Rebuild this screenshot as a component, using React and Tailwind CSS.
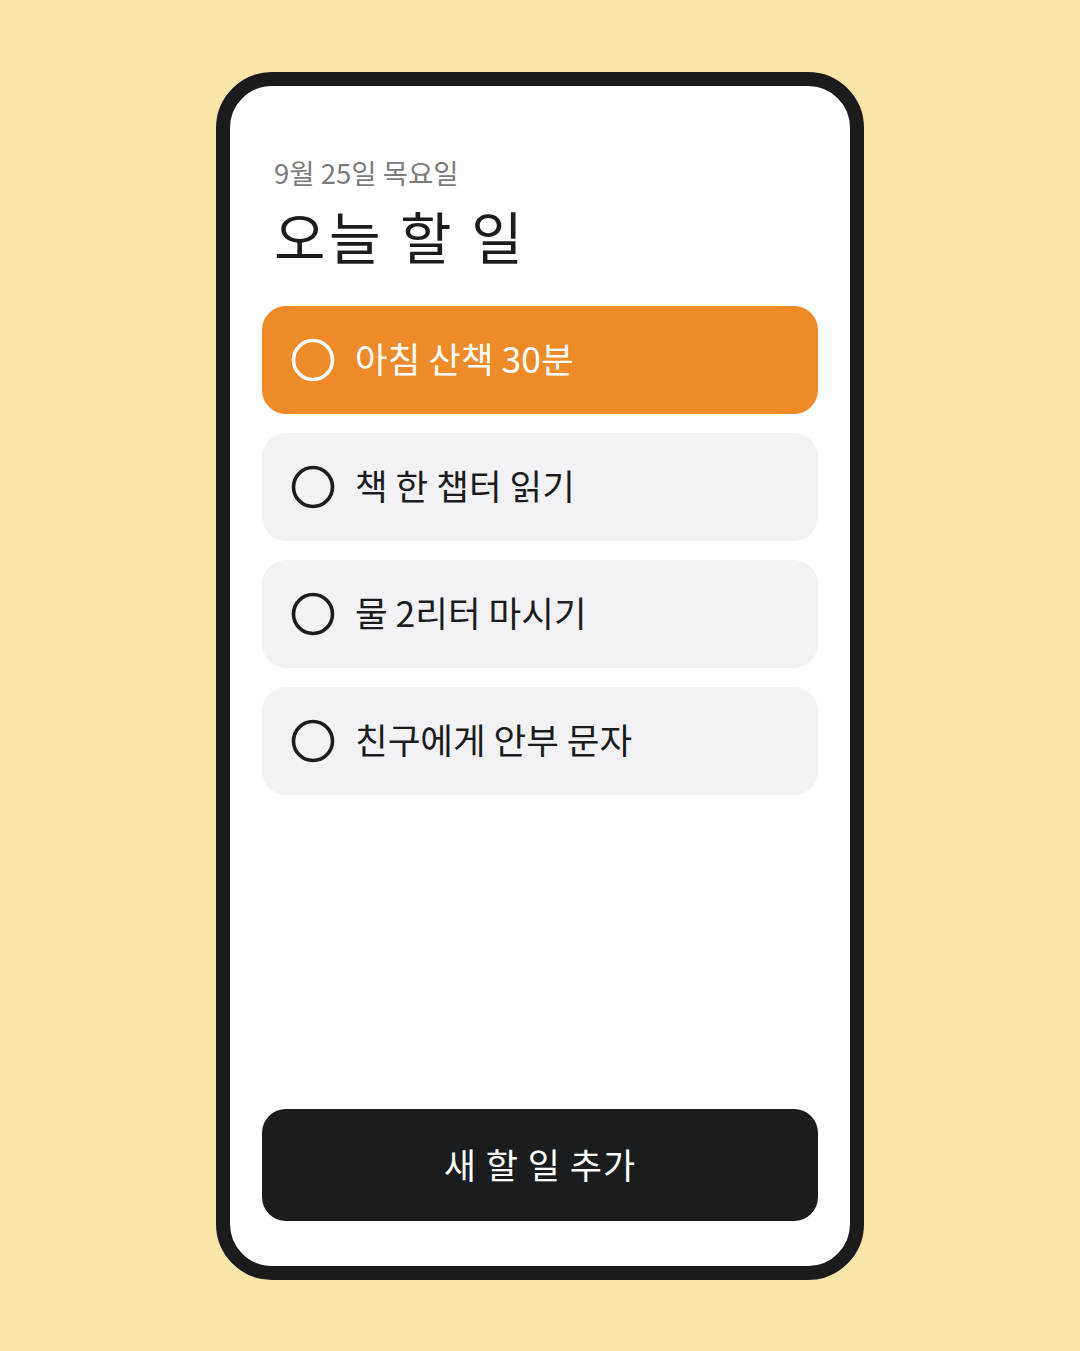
import React from "react";

const font = { fontFamily: '"Noto Sans CJK KR", "Noto Sans", sans-serif' };

function Circle({ white }) {
  return (
    <svg width="44" height="44" viewBox="0 0 44 44" className="shrink-0">
      <circle cx="22" cy="22" r="19.5" fill="none" stroke={white ? "#ffffff" : "#1b1c1e"} strokeWidth="3.6" />
    </svg>
  );
}

const items = ["아침 산책 30분", "책 한 챕터 읽기", "물 2리터 마시기", "친구에게 안부 문자"];

export default function App() {
  return (
    <div className="min-h-[1351px] w-full bg-[#f8e6a8] flex items-center justify-center font-['Noto_Sans_CJK_KR',sans-serif]" style={font}>
      <div className="w-[648px] h-[1208px] rounded-[56px] border-[14px] border-[#1b1b1b] bg-white flex flex-col px-[32px] pt-[68px] pb-[45px]">
        <div className="pl-[12px] text-[27.5px] leading-[36px] text-[#7b7b7b]">9월 25일 목요일</div>
        <div className="pl-[12px] mt-[9px] text-[56px] leading-[72px] text-[#1b1c1e] tracking-[3.5px]">오늘 할 일</div>
        <div className="mt-[35px] flex flex-col gap-[19px]">
          {items.map((t, i) => (
            <div
              key={t}
              className={
                i === 0
                  ? "h-[108px] rounded-[24px] bg-[#ee8b28] flex items-center gap-[20px] px-[29px] text-white"
                  : "h-[108px] rounded-[24px] bg-[#f2f2f4] flex items-center gap-[20px] px-[29px] text-[#1b1c1e]"
              }
            >
              <Circle white={i === 0} />
              <span className="text-[35.5px] leading-none -mt-[3px]">{t}</span>
            </div>
          ))}
        </div>
        <div className="flex-1" />
        <button className="h-[112px] w-full rounded-[24px] bg-[#1a1c1e] text-white text-[35px] tracking-[1px]">새 할 일 추가</button>
      </div>
    </div>
  );
}
